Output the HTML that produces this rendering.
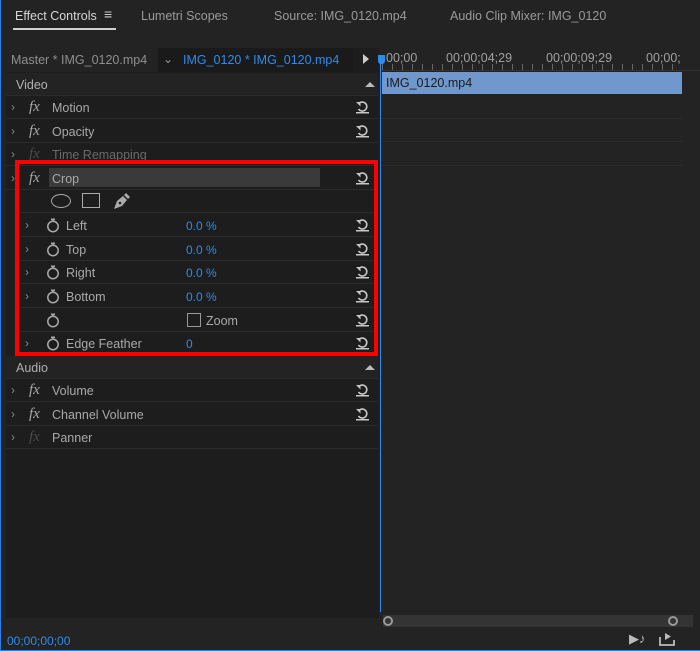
<!DOCTYPE html><html><head><style>
*{margin:0;padding:0;box-sizing:border-box}
body{width:700px;height:651px;background:#232323;font-family:"Liberation Sans",sans-serif;font-size:12px;color:#b4b4b4;position:relative;overflow:hidden}
.a{position:absolute;white-space:nowrap}
.row{position:absolute;left:6px;width:372px;height:23px;border-bottom:1px solid #2b2b2b}
.chev{position:absolute;left:5px;top:4px;color:#888;font-size:12px}
.fx{position:absolute;left:23px;top:3px;font-family:"Liberation Serif",serif;font-style:italic;font-size:15px;color:#a8a8a8}
.lbl{position:absolute;left:46px;top:5px;font-size:12.5px;color:#a9a9a9}
.rst{position:absolute;left:349px;top:3px}
.blue{color:#2d8ceb}
.sw{position:absolute;left:26px;top:4px}
</style></head><body>
<svg width="0" height="0" style="position:absolute"><defs>
<g id="r"><path d="M4 4.5 A4.5 4.5 0 1 1 3.5 10" fill="none" stroke="#c8c8c8" stroke-width="1.6"/><path d="M1 3 L5.5 3 L5.5 7.5 Z" fill="#c8c8c8"/><rect x="1" y="13" width="13" height="1.5" fill="#c8c8c8"/></g>
<g id="s"><circle cx="7" cy="8.5" r="5.2" fill="none" stroke="#aaa" stroke-width="1.5"/><rect x="5" y="0.5" width="4" height="1.6" fill="#aaa"/><line x1="7" y1="2" x2="7" y2="3.5" stroke="#aaa" stroke-width="1.4"/></g>
</defs></svg>
<div class="a" style="left:0;top:0;width:700px;height:651px;border:1px solid #2680eb;border-top:none;border-right:none"></div>
<div class="a" style="left:15px;top:9px;font-size:12.5px;color:#d6d6d6">Effect Controls</div>
<div class="a" style="left:104px;top:6px;font-size:14px;color:#ccc">≡</div>
<div class="a" style="left:13px;top:28px;width:103px;height:2px;background:#d0d0d0"></div>
<div class="a" style="left:141px;top:9px;font-size:12.5px;color:#9a9a9a">Lumetri Scopes</div>
<div class="a" style="left:274px;top:9px;font-size:12.5px;color:#9a9a9a">Source: IMG_0120.mp4</div>
<div class="a" style="left:450px;top:9px;font-size:12.5px;color:#9a9a9a">Audio Clip Mixer: IMG_0120</div>
<div class="a" style="left:6px;top:48px;width:373px;height:570px;background:#1d1d1d"></div>
<div class="a" style="left:6px;top:48px;width:152px;height:24px;background:#232323"></div>
<div class="a" style="left:11px;top:53px;font-size:12.5px;color:#8f8f8f">Master * IMG_0120.mp4</div>
<div class="a" style="left:158px;top:48px;width:195px;height:24px;background:#1a1a1a"></div>
<div class="a" style="left:163px;top:52px;font-size:12px;color:#999">⌄</div>
<div class="a" style="left:183px;top:53px;font-size:12.5px"><span class="blue">IMG_0120 * IMG_0120.mp4</span></div>
<div class="a" style="left:363px;top:54px;width:0;height:0;border-left:6px solid #ccc;border-top:5px solid transparent;border-bottom:5px solid transparent"></div>
<div class="row" style="top:73px;background:#232323"><div class="lbl" style="left:10px;color:#b0b0b0">Video</div><div class="a" style="left:359px;top:9px;border-bottom:5px solid #bbb;border-left:5px solid transparent;border-right:5px solid transparent"></div></div>
<div class="row" style="top:96px"><span class="chev">›</span><span class="fx">fx</span><span class="lbl">Motion</span><svg class="rst" width="15" height="15"><use href="#r"/></svg></div>
<div class="row" style="top:120px"><span class="chev">›</span><span class="fx">fx</span><span class="lbl">Opacity</span><svg class="rst" width="15" height="15"><use href="#r"/></svg></div>
<div class="row" style="top:143px"><span class="chev">›</span><span class="fx" style="color:#4a4a4a">fx</span><span class="lbl" style="color:#6a6a6a">Time Remapping</span></div>
<div class="row" style="top:167px"><span class="chev">›</span><span class="fx">fx</span><div class="a" style="left:43px;top:1px;width:271px;height:19px;background:#3a3a3a"></div><span class="lbl">Crop</span><svg class="rst" width="15" height="15"><use href="#r"/></svg></div>
<div class="row" style="top:190px;left:20px;width:358px">
<div class="a" style="left:31px;top:4px;width:20px;height:14px;border:1.5px solid #aaa;border-radius:50%"></div>
<div class="a" style="left:62px;top:3px;width:18px;height:15px;border:1.5px solid #aaa"></div>
<svg class="a" style="left:92px;top:2px" width="18" height="18"><path d="M2 17 L5 9 L11 4 L15 8 L10 14 Z" fill="#aaa"/><path d="M12 3 L14 1 L18 5 L16 7 Z" fill="#aaa"/><circle cx="8" cy="11" r="1.3" fill="#1d1d1d"/></svg></div>
<div class="row" style="top:214px;left:20px;width:358px"><span class="chev">›</span><svg class="sw" width="15" height="15"><use href="#s"/></svg><span class="lbl">Left</span><span class="a blue" style="left:166px;top:5px">0.0 %</span><svg class="rst" style="left:335px" width="15" height="15"><use href="#r"/></svg></div>
<div class="row" style="top:238px;left:20px;width:358px"><span class="chev">›</span><svg class="sw" width="15" height="15"><use href="#s"/></svg><span class="lbl">Top</span><span class="a blue" style="left:166px;top:5px">0.0 %</span><svg class="rst" style="left:335px" width="15" height="15"><use href="#r"/></svg></div>
<div class="row" style="top:261px;left:20px;width:358px"><span class="chev">›</span><svg class="sw" width="15" height="15"><use href="#s"/></svg><span class="lbl">Right</span><span class="a blue" style="left:166px;top:5px">0.0 %</span><svg class="rst" style="left:335px" width="15" height="15"><use href="#r"/></svg></div>
<div class="row" style="top:285px;left:20px;width:358px"><span class="chev">›</span><svg class="sw" width="15" height="15"><use href="#s"/></svg><span class="lbl">Bottom</span><span class="a blue" style="left:166px;top:5px">0.0 %</span><svg class="rst" style="left:335px" width="15" height="15"><use href="#r"/></svg></div>
<div class="row" style="top:309px;left:20px;width:358px"><svg class="sw" width="15" height="15"><use href="#s"/></svg><div class="a" style="left:167px;top:4px;width:14px;height:14px;border:1.5px solid #999"></div><span class="lbl" style="left:186px">Zoom</span><svg class="rst" style="left:335px" width="15" height="15"><use href="#r"/></svg></div>
<div class="row" style="top:332px;left:20px;width:358px"><span class="chev">›</span><svg class="sw" width="15" height="15"><use href="#s"/></svg><span class="lbl">Edge Feather</span><span class="a blue" style="left:166px;top:5px">0</span><svg class="rst" style="left:335px" width="15" height="15"><use href="#r"/></svg></div>
<div class="row" style="top:356px;background:#232323"><div class="lbl" style="left:10px;color:#b0b0b0">Audio</div><div class="a" style="left:359px;top:9px;border-bottom:5px solid #bbb;border-left:5px solid transparent;border-right:5px solid transparent"></div></div>
<div class="row" style="top:379px"><span class="chev">›</span><span class="fx">fx</span><span class="lbl">Volume</span><svg class="rst" width="15" height="15"><use href="#r"/></svg></div>
<div class="row" style="top:403px"><span class="chev">›</span><span class="fx">fx</span><span class="lbl">Channel Volume</span><svg class="rst" width="15" height="15"><use href="#r"/></svg></div>
<div class="row" style="top:426px"><span class="chev">›</span><span class="fx" style="color:#4a4a4a">fx</span><span class="lbl">Panner</span></div>
<div class="a" style="left:15px;top:160px;width:363px;height:196px;border:4px solid #f00"></div>
<div class="a" style="left:380px;top:48px;width:320px;height:23px;background:#232323;border-bottom:1px solid #333"></div>
<div class="a" style="left:386px;top:51px;font-size:12.5px;color:#a0a0a0">00;00</div>
<div class="a" style="left:446px;top:51px;font-size:12.5px;color:#a0a0a0">00;00;04;29</div>
<div class="a" style="left:546px;top:51px;font-size:12.5px;color:#a0a0a0">00;00;09;29</div>
<div class="a" style="left:646px;top:51px;font-size:12.5px;color:#a0a0a0">00;00;</div>
<div class="a" style="left:382px;top:64px;width:300px;height:6px;background:repeating-linear-gradient(90deg,#666 0 1px,transparent 1px 10px)"></div>
<div class="a" style="left:382px;top:72px;width:300px;height:22px;background:#7198cd"></div>
<div class="a" style="left:386px;top:76px;font-size:12.5px;color:#1a1a1a">IMG_0120.mp4</div>
<div class="a" style="left:382px;top:118px;width:300px;height:1px;background:#2c2c2c"></div>
<div class="a" style="left:382px;top:141px;width:300px;height:1px;background:#2c2c2c"></div>
<div class="a" style="left:382px;top:165px;width:300px;height:1px;background:#2c2c2c"></div>
<div class="a" style="left:380px;top:56px;width:1px;height:556px;background:#2d8ceb"></div>
<div class="a" style="left:378px;top:55px;width:7px;height:9px;background:#2d8ceb;border-radius:0 0 3px 3px"></div>
<div class="a" style="left:383px;top:615px;width:310px;height:12px;background:#343434"></div>
<div class="a" style="left:383px;top:616px;width:10px;height:10px;border:2px solid #999;border-radius:50%"></div>
<div class="a" style="left:668px;top:616px;width:10px;height:10px;border:2px solid #999;border-radius:50%"></div>
<div class="a" style="left:7px;top:634px;font-size:12px"><span class="blue">00;00;00;00</span></div>
<div class="a" style="left:629px;top:631px;font-size:13px;color:#bbb">▶♪</div>
<svg class="a" style="left:659px;top:632px" width="16" height="14"><path d="M1 5 V13 H15 V8" fill="none" stroke="#bbb" stroke-width="1.8"/><path d="M6 1 L12 4.5 L6 8 Z" fill="#bbb"/></svg>
</body></html>
